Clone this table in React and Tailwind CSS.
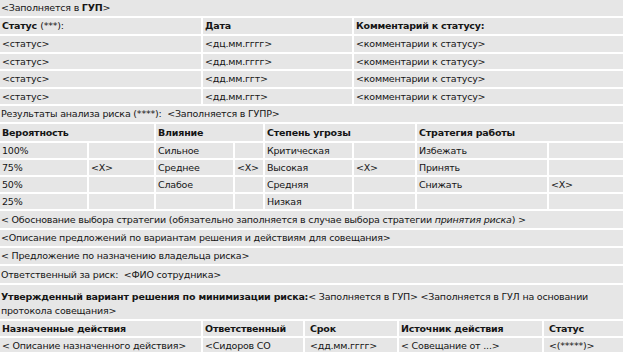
import React from "react";

const line = "border-white";

function Cell({ w, children, first, bold, className = "" }) {
  return (
    <div
      className={`${w} shrink-0 h-full flex items-center pl-[2px] whitespace-nowrap ${first ? "" : "border-l-2 " + line} ${bold ? "font-bold" : ""} ${className}`}
    >
      {children}
    </div>
  );
}

function Row({ h, children, className = "" }) {
  return <div className={`${h} flex border-b-2 ${line} ${className}`}>{children}</div>;
}

function Line({ h, children, className = "" }) {
  return (
    <div className={`${h} flex items-center pl-[1px] whitespace-nowrap border-b-2 ${line} ${className}`}>
      {children}
    </div>
  );
}

export default function App() {
  const t1 = [
    ["<статус>", "<дц.мм.гггг>", "<комментарии к статусу>", "h-[18px]"],
    ["<статус>", "<дд.мм.гггг>", "<комментарии к статусу>", "h-[17px]"],
    ["<статус>", "<дд.мм.ггт>", "<комментарии к статусу>", "h-[18px]"],
    ["<статус>", "<дд.мм.ггт>", "<комментарии к статусу>", "h-[17px]"],
  ];
  const t2 = [
    ["100%", "", "Сильное", "", "Критическая", "", "Избежать", ""],
    ["75%", "<X>", "Среднее", "<X>", "Высокая", "<X>", "Принять", ""],
    ["50%", "", "Слабое", "", "Средняя", "", "Снижать", "<X>"],
    ["25%", "", "", "", "Низкая", "", "", ""],
  ];
  const w2 = ["w-[87px]", "w-[67px]", "w-[79px]", "w-[30px]", "w-[89px]", "w-[63px]", "w-[132px]", "flex-1"];
  return (
    <div
      className="w-[623px] h-[352px] overflow-hidden bg-[#e6e6e6] text-[#151515] text-[9.5px] leading-none tracking-[-0.2px]"
      style={{ fontFamily: "'DejaVu Sans', 'Liberation Sans', sans-serif" }}
    >
      <Line h="h-[18px]">
        &lt;Заполняется в&nbsp;<b>ГУП</b>&gt;
      </Line>
      <Row h="h-[18px]">
        <Cell w="w-[201px]" first bold>
          Статус&nbsp;<span className="font-normal">(***):</span>
        </Cell>
        <Cell w="w-[151px]" bold>Дата</Cell>
        <Cell w="flex-1" bold>Комментарий к статусу:</Cell>
      </Row>
      {t1.map((r, i) => (
        <Row key={i} h={r[3]}>
          <Cell w="w-[201px]" first>{r[0]}</Cell>
          <Cell w="w-[151px]">{r[1]}</Cell>
          <Cell w="flex-1">{r[2]}</Cell>
        </Row>
      ))}
      <Line h="h-[18px]">Результаты анализа риска (****):&nbsp; &lt;Заполняется в ГУПР&gt;</Line>
      <Row h="h-[19px]">
        <Cell w="w-[154px]" first bold>Вероятность</Cell>
        <Cell w="w-[109px]" bold>Влияние</Cell>
        <Cell w="w-[152px]" bold>Степень угрозы</Cell>
        <Cell w="flex-1" bold>Стратегия работы</Cell>
      </Row>
      {t2.map((r, i) => (
        <Row key={i} h="h-[17px]">
          {r.map((c, j) => (
            <Cell key={j} w={w2[j]} first={j === 0}>
              {c}
            </Cell>
          ))}
        </Row>
      ))}
      <Line h="h-[19px]">
        &lt; Обоснование выбора стратегии (обязательно заполняется в случае выбора стратегии&nbsp;
        <i>принятия риска</i>) &gt;
      </Line>
      <Line h="h-[18px]">&lt;Описание предложений по вариантам решения и действиям для совещания&gt;</Line>
      <Line h="h-[18px]">&lt; Предложение по назначению владельца риска&gt;</Line>
      <Line h="h-[19px]">Ответственный за риск:&nbsp; &lt;ФИО сотрудника&gt;</Line>
      <div className={`h-[36px] border-b-2 ${line} pl-[1px] pt-[7px]`}>
        <div className="whitespace-nowrap">
          <b>Утвержденный вариант решения по минимизации риска:</b>&lt; Заполняется в ГУП&gt; &lt;Заполняется в ГУЛ на
          основании
        </div>
        <div className="mt-[4px]">протокола совещания&gt;</div>
      </div>
      <Row h="h-[17px]">
        <Cell w="w-[201px]" first bold>Назначенные действия</Cell>
        <Cell w="w-[102px]" bold>Ответственный</Cell>
        <Cell w="w-[94px]" bold className="pl-[5px]">Срок</Cell>
        <Cell w="w-[145px]" bold>Источник действия</Cell>
        <Cell w="flex-1" bold className="pl-[5px]">Статус</Cell>
      </Row>
      <Row h="h-[17px]">
        <Cell w="w-[201px]" first>&lt; Описание назначенного действия&gt;</Cell>
        <Cell w="w-[102px]">&lt;Сидоров СО</Cell>
        <Cell w="w-[94px]" className="pl-[5px]">&lt;дд.мм.гггг&gt;</Cell>
        <Cell w="w-[145px]">&lt; Совещание от ...&gt;</Cell>
        <Cell w="flex-1" className="pl-[5px]">&lt;(*****)&gt;</Cell>
      </Row>
    </div>
  );
}
